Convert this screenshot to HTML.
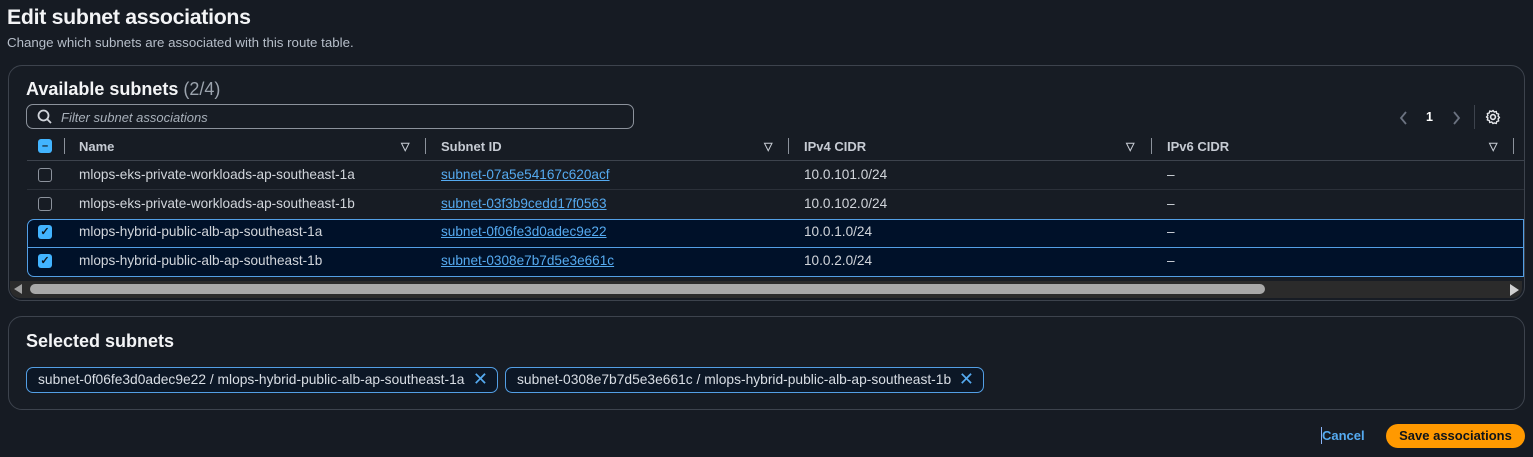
<!DOCTYPE html>
<html><head><style>
*{box-sizing:border-box;margin:0;padding:0}
body{width:1533px;height:457px;background:#161b23;font-family:"Liberation Sans",sans-serif;color:#d1d5db;position:relative;overflow:hidden;font-size:13px}
.a{position:absolute}
h1{position:absolute;left:7px;top:5px;font-size:21.3px;font-weight:bold;color:#f3f4f6;letter-spacing:-0.3px}
.sub{left:7px;top:35px;font-size:13.3px;color:#b6bec9}
.box{border:1px solid #3d434d;border-radius:14px;background:#171c24}
.h2{font-size:18px;font-weight:bold;color:#f3f4f6}
.cb{width:14px;height:14px;border:1.5px solid #8c929c;border-radius:3px}
.cbon{width:14px;height:14px;background:#42b4ff;border-radius:3px;color:#0f141a;font-size:11px;font-weight:bold;text-align:center;line-height:14px}
.th{top:139px;font-weight:bold;color:#c6cbd3;font-size:13px}
.sep{width:1px;height:16px;background:#8c929c;top:138px}
.tri{top:140px;font-size:11px;color:#c6cbd3;font-weight:bold}
.row{left:27px;width:1497px;height:29px}
.sel{background:#001129;border:1px solid #539fe5}
.link{color:#55aaf0;text-decoration:underline}
.cell{font-size:13.6px}
.chip{height:26px;border:1px solid #539fe5;border-radius:7px;background:#0c1726;font-size:13.8px;color:#d8dde4;padding:4px 0 0 11px;top:367px;white-space:nowrap}
.x{position:absolute;right:9px;top:1px;color:#55aaf0;font-size:18px}
</style></head><body>
<h1>Edit subnet associations</h1>
<div class="a sub">Change which subnets are associated with this route table.</div>

<div class="a box" style="left:8px;top:65px;width:1517px;height:236px"></div>
<div class="a h2" style="left:26px;top:79px">Available subnets <span style="font-weight:normal;color:#9ba3ad">(2/4)</span></div>
<div class="a" style="left:26px;top:104px;width:608px;height:25px;border:1px solid #8c929c;border-radius:7px"></div>
<svg class="a" style="left:37px;top:109px" width="16" height="16"><circle cx="6.5" cy="6.5" r="5" fill="none" stroke="#d1d5db" stroke-width="1.8"/><line x1="10" y1="10" x2="14" y2="14" stroke="#d1d5db" stroke-width="1.8"/></svg>
<div class="a" style="left:61px;top:110px;font-style:italic;color:#a8b0ba;font-size:13px">Filter subnet associations</div>
<svg class="a" style="left:1398px;top:110px" width="12" height="16"><path d="M8 2L3 8l5 6" fill="none" stroke="#6b7280" stroke-width="1.8"/></svg>
<div class="a" style="left:1426px;top:110px;color:#fff;font-weight:bold;font-size:12.5px">1</div>
<svg class="a" style="left:1450px;top:110px" width="12" height="16"><path d="M4 2l5 6-5 6" fill="none" stroke="#6b7280" stroke-width="1.8"/></svg>
<div class="a" style="left:1474px;top:105px;width:1px;height:24px;background:#3d434d"></div>
<svg class="a" style="left:1485px;top:109px" width="16" height="16" viewBox="0 0 16 16"><circle cx="8" cy="8" r="2.4" fill="none" stroke="#e5e7eb" stroke-width="1.6"/><path d="M8 1.5l1.3 1.6 2-.6.4 2 2 .6-.6 2 1.4 1.4-1.4 1.4.6 2-2 .6-.4 2-2-.6L8 14.5l-1.3-1.6-2 .6-.4-2-2-.6.6-2L1.5 8l1.4-1.4-.6-2 2-.6.4-2 2 .6z" fill="none" stroke="#e5e7eb" stroke-width="1.4" stroke-linejoin="round"/></svg>

<div class="a cbon" style="left:38px;top:139px">&#8211;</div>
<div class="a sep" style="left:64px"></div>
<div class="a th" style="left:79px">Name</div><div class="a tri" style="left:401px">&#9661;</div><div class="a sep" style="left:425px"></div>
<div class="a th" style="left:441px">Subnet ID</div><div class="a tri" style="left:764px">&#9661;</div><div class="a sep" style="left:788px"></div>
<div class="a th" style="left:804px">IPv4 CIDR</div><div class="a tri" style="left:1126px">&#9661;</div><div class="a sep" style="left:1151px"></div>
<div class="a th" style="left:1167px">IPv6 CIDR</div><div class="a tri" style="left:1489px">&#9661;</div><div class="a sep" style="left:1513px"></div>
<div class="a" style="left:27px;top:160px;width:1497px;height:1px;background:#3d434d"></div>

<div class="a row" style="top:161px;border-bottom:1px solid #2b3039"></div>
<div class="a cb" style="left:38px;top:168px"></div>
<div class="a cell" style="left:79px;top:167px">mlops-eks-private-workloads-ap-southeast-1a</div>
<div class="a cell link" style="left:441px;top:167px">subnet-07a5e54167c620acf</div>
<div class="a cell" style="left:804px;top:167px">10.0.101.0/24</div>
<div class="a cell" style="left:1167px;top:167px">–</div>

<div class="a cb" style="left:38px;top:197px"></div>
<div class="a cell" style="left:79px;top:196px">mlops-eks-private-workloads-ap-southeast-1b</div>
<div class="a cell link" style="left:441px;top:196px">subnet-03f3b9cedd17f0563</div>
<div class="a cell" style="left:804px;top:196px">10.0.102.0/24</div>
<div class="a cell" style="left:1167px;top:196px">–</div>

<div class="a row sel" style="top:219px;height:30px;border-radius:7px 0 0 0"></div>
<div class="a row sel" style="top:247px;height:30px;border-radius:0 0 0 7px"></div>
<div class="a cbon" style="left:38px;top:225px">&#10003;</div>
<div class="a cell" style="left:79px;top:224px">mlops-hybrid-public-alb-ap-southeast-1a</div>
<div class="a cell link" style="left:441px;top:224px">subnet-0f06fe3d0adec9e22</div>
<div class="a cell" style="left:804px;top:224px">10.0.1.0/24</div>
<div class="a cell" style="left:1167px;top:224px">–</div>
<div class="a cbon" style="left:38px;top:254px">&#10003;</div>
<div class="a cell" style="left:79px;top:253px">mlops-hybrid-public-alb-ap-southeast-1b</div>
<div class="a cell link" style="left:441px;top:253px">subnet-0308e7b7d5e3e661c</div>
<div class="a cell" style="left:804px;top:253px">10.0.2.0/24</div>
<div class="a cell" style="left:1167px;top:253px">–</div>

<div class="a" style="left:10px;top:281px;width:1512px;height:17px;background:#2b2b2b;border-radius:0 0 10px 10px"></div>
<div class="a" style="left:14px;top:284px;width:0;height:0;border-top:5px solid transparent;border-bottom:5px solid transparent;border-right:8px solid #a0a0a0"></div>
<div class="a" style="left:30px;top:284px;width:1235px;height:10px;background:#a8a8a8;border-radius:5px"></div>
<div class="a" style="left:1510px;top:284px;width:0;height:0;border-top:6px solid transparent;border-bottom:6px solid transparent;border-left:9px solid #d0d0d0"></div>

<div class="a box" style="left:8px;top:316px;width:1517px;height:94px"></div>
<div class="a h2" style="left:26px;top:331px">Selected subnets</div>
<div class="a chip" style="left:26px;width:472px">subnet-0f06fe3d0adec9e22 / mlops-hybrid-public-alb-ap-southeast-1a<span class="x">&#x2715;</span></div>
<div class="a chip" style="left:505px;width:479px">subnet-0308e7b7d5e3e661c / mlops-hybrid-public-alb-ap-southeast-1b<span class="x">&#x2715;</span></div>

<div class="a" style="left:1321px;top:427px;width:1px;height:17px;background:#8ab4f8"></div>
<div class="a" style="left:1322px;top:428px;color:#55aaf0;font-weight:bold;font-size:13px">Cancel</div>
<div class="a" style="left:1386px;top:424px;width:139px;height:24px;background:#ff9900;border-radius:12px;color:#0f141a;font-weight:bold;font-size:13px;text-align:center;line-height:24px">Save associations</div>
</body></html>
